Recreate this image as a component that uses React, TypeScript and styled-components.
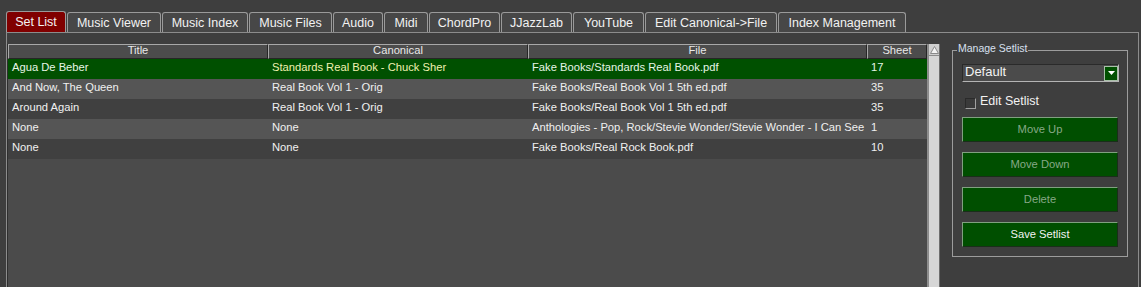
import React from 'react';
import styled, { createGlobalStyle } from 'styled-components';

const Global = createGlobalStyle`
  html, body { margin: 0; padding: 0; background: #3e3e3e; }
  body { font-family: "Liberation Sans", Arial, sans-serif; overflow: hidden; }
  * { box-sizing: border-box; }
`;

const Window = styled.div`
  width: 1141px;
  height: 287px;
  padding: 11px 2px 0 6px;
  display: flex;
  flex-direction: column;
  background: #3e3e3e;
`;

const TabBar = styled.div`
  display: flex;
  gap: 1px;
  height: 21px;
  align-items: flex-end;
`;

const Tab = styled.div<{ $w: number; $active?: boolean }>`
  width: ${(p) => p.$w}px;
  height: ${(p) => (p.$active ? 21 : 20)}px;
  border: 1px solid #9a9a9a;
  border-bottom: none;
  border-radius: 3px 3px 0 0;
  background: ${(p) => (p.$active ? '#800000' : '#474747')};
  color: #f2f2f2;
  font-size: 12.5px;
  display: flex;
  align-items: center;
  justify-content: center;
  white-space: nowrap;
`;

const Panel = styled.div`
  flex: 1;
  min-height: 0;
  display: flex;
  border: 1px solid #8c8c8c;
  border-bottom: none;
`;

const TableArea = styled.div`
  width: 933px;
  padding-top: 11px;
  display: flex;
`;

const Grid = styled.div`
  flex: 1;
  display: flex;
  flex-direction: column;
  background: #4b4b4b;
  border-left: 1px solid #2e2e2e;
  border-right: 1px solid #8e8e8e;
`;

const Row = styled.div`
  display: grid;
  grid-template-columns: 260px 260px 339px 1fr;
`;

const HeadCell = styled.div`
  height: 15px;
  border-top: 1px solid #a8a8a8;
  border-left: 1px solid #a8a8a8;
  border-right: 1px solid #262626;
  border-bottom: 1px solid #262626;
  background: #4c4c4c;
  color: #e8e8e8;
  font-size: 11.2px;
  line-height: 11px;
  text-align: center;
`;

const DataRow = styled(Row)<{ $bg: string }>`
  height: 20px;
  background: ${(p) => p.$bg};
`;

const Cell = styled.div<{ $color: string }>`
  padding: 0 4px 0 4px;
  font-size: 11.2px;
  line-height: 17px;
  color: ${(p) => p.$color};
  white-space: nowrap;
  overflow: hidden;
`;

const Scrollbar = styled.div`
  width: 12px;
  display: flex;
  flex-direction: column;
  background: #d6d6d6;
  border-left: 1px solid #8c8c8c;
  border-right: 1px solid #6e6e6e;
`;

const ScrollButton = styled.div`
  height: 12px;
  border-bottom: 1px solid #8c8c8c;
  background: #cfcfcf;
  display: flex;
  align-items: center;
  justify-content: center;
`;

const Side = styled.div`
  flex: 1;
  padding: 17px 10px 0 12px;
`;

const Group = styled.div`
  position: relative;
  border: 1px solid #9c9c9c;
  padding: 13px 8px 9px 9px;
  display: flex;
  flex-direction: column;
`;

const Legend = styled.span`
  position: absolute;
  top: -9px;
  left: 4px;
  padding: 0 1px;
  background: #3e3e3e;
  color: #d8e0f0;
  font-size: 10.5px;
  line-height: 12px;
`;

const Combo = styled.div`
  height: 18px;
  display: flex;
  align-items: center;
  justify-content: space-between;
  padding: 0 0 0 2px;
  background: #4b4b4b;
  border-top: 1px solid #2a2a2a;
  border-left: 1px solid #2a2a2a;
  border-bottom: 1px solid #b4b4b4;
  border-right: 1px solid #b4b4b4;
  color: #f2f2f2;
  font-size: 13px;
`;

const ComboText = styled.span`
  line-height: 13px;
  margin-bottom: 3px;
`;

const ComboButton = styled.div`
  width: 14px;
  height: 15px;
  background: #005000;
  border: 1px solid #a8c0a8;
  display: flex;
  align-items: center;
  justify-content: center;
`;

const CheckRow = styled.label`
  margin-top: 12px;
  height: 16px;
  padding-left: 3px;
  display: flex;
  align-items: center;
  gap: 4px;
  color: #f2f2f2;
  font-size: 12.5px;
`;

const CheckLabel = styled.span`
  line-height: 13px;
  margin-bottom: 1px;
`;

const CheckBox = styled.span`
  width: 11px;
  height: 11px;
  margin-top: 2px;
  background: #3a3a3a;
  border-top: 1px solid #2a2a2a;
  border-left: 1px solid #2a2a2a;
  border-bottom: 1px solid #a0a0a0;
  border-right: 1px solid #a0a0a0;
`;

const Buttons = styled.div`
  margin-top: 7px;
  margin-right: 1px;
  display: flex;
  flex-direction: column;
  gap: 10px;
`;

const GreenButton = styled.div<{ $enabled?: boolean }>`
  height: 25px;
  padding-bottom: 1px;
  background: #004f00;
  border-top: 1px solid #80a080;
  border-left: 1px solid #80a080;
  border-bottom: 1px solid #1a2e1a;
  border-right: 1px solid #1a2e1a;
  color: ${(p) => (p.$enabled ? '#f2f2f2' : '#86a886')};
  font-size: 11.2px;
  display: flex;
  align-items: center;
  justify-content: center;
`;

const tabs: [string, number][] = [
  ['Set List', 60],
  ['Music Viewer', 94],
  ['Music Index', 86],
  ['Music Files', 83],
  ['Audio', 50],
  ['Midi', 44],
  ['ChordPro', 71],
  ['JJazzLab', 71],
  ['YouTube', 71],
  ['Edit Canonical->File', 132],
  ['Index Management', 128],
];

const rows = [
  ['Agua De Beber', 'Standards Real Book - Chuck Sher', 'Fake Books/Standards Real Book.pdf', '17'],
  ['And Now, The Queen', 'Real Book Vol 1 - Orig', 'Fake Books/Real Book Vol 1 5th ed.pdf', '35'],
  ['Around Again', 'Real Book Vol 1 - Orig', 'Fake Books/Real Book Vol 1 5th ed.pdf', '35'],
  ['None', 'None', 'Anthologies - Pop, Rock/Stevie Wonder/Stevie Wonder - I Can See It In Your Eyes.pdf', '1'],
  ['None', 'None', 'Fake Books/Real Rock Book.pdf', '10'],
];

const rowBg = (i: number) => (i === 0 ? '#005000' : i % 2 === 1 ? '#555555' : '#404040');

export default function App() {
  return (
    <Window>
      <Global />
      <TabBar>
        {tabs.map(([t, w], i) => (
          <Tab key={t} $w={w} $active={i === 0}>
            {t}
          </Tab>
        ))}
      </TabBar>
      <Panel>
        <TableArea>
          <Grid>
            <Row>
              <HeadCell>Title</HeadCell>
              <HeadCell>Canonical</HeadCell>
              <HeadCell>File</HeadCell>
              <HeadCell>Sheet</HeadCell>
            </Row>
            {rows.map((r, i) => (
              <DataRow key={i} $bg={rowBg(i)}>
                {r.map((c, j) => (
                  <Cell key={j} $color={i === 0 ? (j === 1 ? '#f0f0b0' : '#e6f6e6') : '#f0f0f0'}>
                    {c}
                  </Cell>
                ))}
              </DataRow>
            ))}
          </Grid>
          <Scrollbar>
            <ScrollButton>
              <svg width="9" height="8" viewBox="0 0 9 8">
                <path d="M4.5 0.5 L8.5 7.5 L0.5 7.5 Z" fill="#f4f4f4" stroke="#8a8a8a" strokeWidth="1" />
              </svg>
            </ScrollButton>
          </Scrollbar>
        </TableArea>
        <Side>
          <Group>
            <Legend>Manage Setlist</Legend>
            <Combo>
              <ComboText>Default</ComboText>
              <ComboButton>
                <svg width="7" height="4" viewBox="0 0 7 4">
                  <path d="M0 0 H7 L3.5 4 Z" fill="#ffffff" />
                </svg>
              </ComboButton>
            </Combo>
            <CheckRow>
              <CheckBox />
              <CheckLabel>Edit Setlist</CheckLabel>
            </CheckRow>
            <Buttons>
              <GreenButton>Move Up</GreenButton>
              <GreenButton>Move Down</GreenButton>
              <GreenButton>Delete</GreenButton>
              <GreenButton $enabled>Save Setlist</GreenButton>
            </Buttons>
          </Group>
        </Side>
      </Panel>
    </Window>
  );
}
